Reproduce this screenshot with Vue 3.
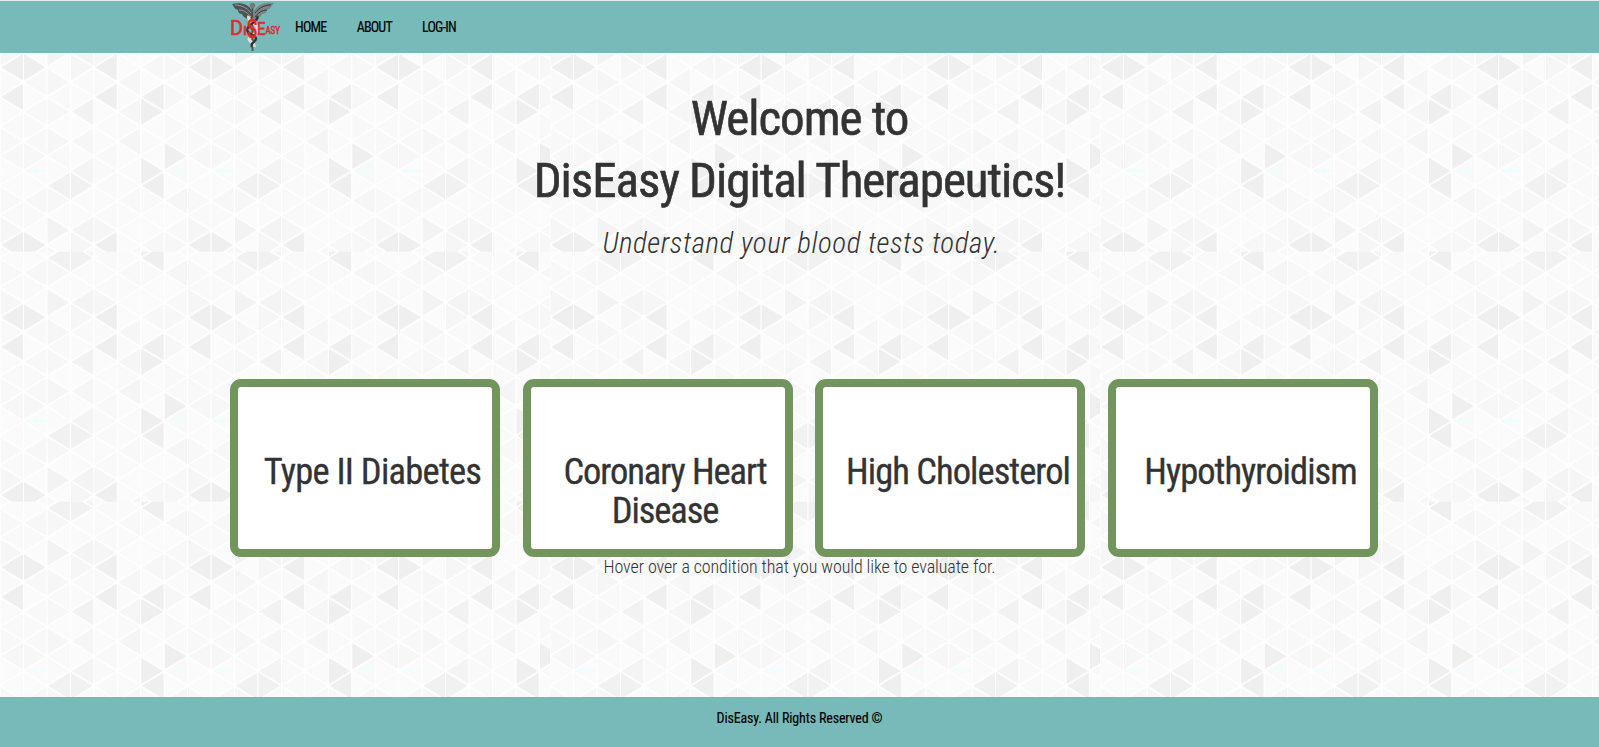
<script setup>
const COL = 23.45
const ROW = 14.81
// Grey level per triangle: 12 half-rows by 8 columns
const shades = [
  'ef ef fb f6 ef fb f7 f7',
  'f9 f8 f6 f9 f9 f6 fb fa',
  'ef fb f9 fa ef fa ef f7',
  'fa f8 f7 f2 fb f6 ef fb',
  'f9 f9 fb fb fa f9 fb f8',
  'f8 f8 f6 f6 fa f5 fa f9',
  'f7 f7 f9 fb f8 fb fb ef',
  'fb fb fa f4 f9 fa ef f9',
  'fb fb f1 f1 f9 fa ef fb',
  'f8 f7 f7 fa fa f8 f9 f6',
  'f9 f9 fb fa f9 fa fb fb',
  'f6 fb f3 f4 f6 fb fb f8',
].map((r) => r.split(' '))

const triangles = []
for (let c = 0; c < 24; c++) {
  for (let h = -5; h < 14; h++) {
    const x0 = c * COL
    const x1 = x0 + COL
    const y = 65.6 + h * ROW
    const left = (c + h + 20) % 2 === 0
    const [ax, bx] = left ? [x0 + 2, x1 - 1.1] : [x1 - 2, x0 + 1.1]
    const s = shades[(h + 12) % 12][c % 8]
    triangles.push({
      points: `${ax},${y} ${bx},${y - 12.4} ${bx},${y + 12.4}`,
      fill: `#${s}${s}${s}`,
    })
  }
}
const glints = [36, 178, 224, 366, 412].map((x, i) => ({ x, w: i % 2 ? 8 : 10 }))

const links = ['Home', 'About', 'Log-in']
const conditions = ['Type II Diabetes', 'Coronary Heart Disease', 'High Cholesterol', 'Hypothyroidism']
</script>

<template>
  <div class="page">
    <svg class="backdrop" width="1599" height="747" aria-hidden="true">
      <defs>
        <pattern id="tile" x="0" y="1.7" width="550" height="250" patternUnits="userSpaceOnUse">
          <rect width="550" height="250" fill="#fff" />
          <polygon v-for="(t, i) in triangles" :key="i" :points="t.points" :fill="t.fill" :stroke="t.fill" stroke-width="1" stroke-linejoin="round" />
          <ellipse v-for="g in glints" :key="g.x" :cx="g.x" cy="169" :rx="g.w" ry="1.5" fill="#ecffff" />
        </pattern>
      </defs>
      <rect width="1599" height="747" fill="url(#tile)" />
    </svg>

    <header>
      <div class="container bar">
        <svg class="logo" width="52" height="51" viewBox="0 0 52 51">
          <path d="M22 10C19 3 11 1 2 3C4 5 4 8 8 9C8 12 10 13 12 13C13 16 16 17 17 18L22 21Z" fill="#4d5355" />
          <path d="M24 10C28 3 35 1 44 2C41 5 41 8 37 9C37 12 34 13 32 13C31 16 28 17 27 18L24 21Z" fill="#7d8486" />
          <path d="M5 4C12 4 17 7 21 12M9 9C14 9 18 12 21 16" stroke="#a8afb0" stroke-width=".8" fill="none" />
          <path d="M41 4C34 4 29 7 25 12M37 9C32 9 28 12 25 16" stroke="#24282a" stroke-width=".8" fill="none" />
          <path d="M22.500 4V50" stroke="#555" stroke-width="2" />
          <circle cx="22.500" cy="4.500" r="2.700" fill="#777" />
          <path d="M19 15C16 20 29 23 28 29C27 34 19 34 19 38C20 42 25 41 24 46" stroke="#ddd" stroke-width="3.200" fill="none" />
          <path d="M27 15C30 20 17 23 17 29C18 34 27 34 26 38C25 42 20 41 22 46" stroke="#333" stroke-width="2.400" fill="none" />
          <text x="0" y="33.500" font-size="20" textLength="13" lengthAdjust="spacingAndGlyphs">D</text>
          <text x="13" y="33.500" font-size="12" textLength="4" lengthAdjust="spacingAndGlyphs">I</text>
          <text x="17" y="37" font-size="25" textLength="10" lengthAdjust="spacingAndGlyphs" class="snake">S</text>
          <text x="27" y="33.500" font-size="18" textLength="8.500" lengthAdjust="spacingAndGlyphs">E</text>
          <text x="35.500" y="32.500" font-size="11" textLength="14.500" lengthAdjust="spacingAndGlyphs">ASY</text>
        </svg>
        <nav><a v-for="l in links" :key="l" href="#">{{ l }}</a></nav>
      </div>
    </header>

    <main>
      <h1>Welcome to<br />DisEasy Digital Therapeutics!</h1>
      <p class="lead">Understand your blood tests today.</p>
      <div class="container cards">
        <section v-for="c in conditions" :key="c" class="card"><h2>{{ c }}</h2></section>
      </div>
      <p class="hint">Hover over a condition that you would like to evaluate for.</p>
    </main>

    <footer>DisEasy. All Rights Reserved ©</footer>
  </div>
</template>

<style>
body { margin: 0; }
</style>

<style scoped>
.page {
  position: relative;
  display: flex;
  flex-direction: column;
  height: 747px;
  overflow: hidden;
  color: #333;
  font-family: "Roboto Condensed", Roboto, sans-serif;
  font-stretch: 75%;
}
.backdrop { position: absolute; inset: 0; z-index: -1; }
header { height: 52px; border-top: 1px solid #e4ecec; background: #78baba; }
.container { box-sizing: border-box; width: 1169px; margin: 0 auto; padding-left: 15px; }
.bar { display: flex; }
.logo { display: block; }
.logo text { fill: #d92f33; stroke: #d92f33; stroke-width: 0.6px; font-family: Roboto, sans-serif; font-stretch: 100%; }
.logo .snake { fill: #f0201c; stroke: #f0201c; stroke-width: 0.8px; }
nav { display: flex; gap: 30.2px; padding-left: 13px; }
nav a { color: #000; font-size: 14px; line-height: 52px; letter-spacing: -0.8px; text-transform: uppercase; text-decoration: none; -webkit-text-stroke: 0.15px #000; }
main { flex: 1; }
h1, h2, p { margin: 0; text-align: center; }
h1 { padding-top: 35px; font-size: 49px; font-weight: 400; line-height: 62px; letter-spacing: -1px; -webkit-text-stroke: 0.6px #333; }
.lead { padding: 11px 0 1px 4px; font-size: 29px; line-height: 40px; font-weight: 300; font-style: italic; letter-spacing: 0.53px; }
.cards { display: flex; gap: 22.5px; padding-top: 115px; }
.card { box-sizing: border-box; flex: none; width: 270px; height: 178px; border: 8px solid #71955d; border-radius: 11px; background: #fff; }
h2 { padding: 65px 0 0 16px; font-size: 36.5px; font-weight: 400; line-height: 39px; letter-spacing: -0.95px; -webkit-text-stroke: 0.3px #333; }
.card:nth-child(1) h2 { padding-left: 15px; letter-spacing: -0.75px; }
.card:nth-child(2) h2 { padding-left: 15px; letter-spacing: -1.08px; }
.hint { font-size: 18px; line-height: 20px; font-weight: 300; letter-spacing: -0.1px; }
footer { height: 50px; background: #78baba; color: #000; text-align: center; font-size: 14px; line-height: 43px; letter-spacing: -0.15px; -webkit-text-stroke: 0.15px #000; }
</style>
